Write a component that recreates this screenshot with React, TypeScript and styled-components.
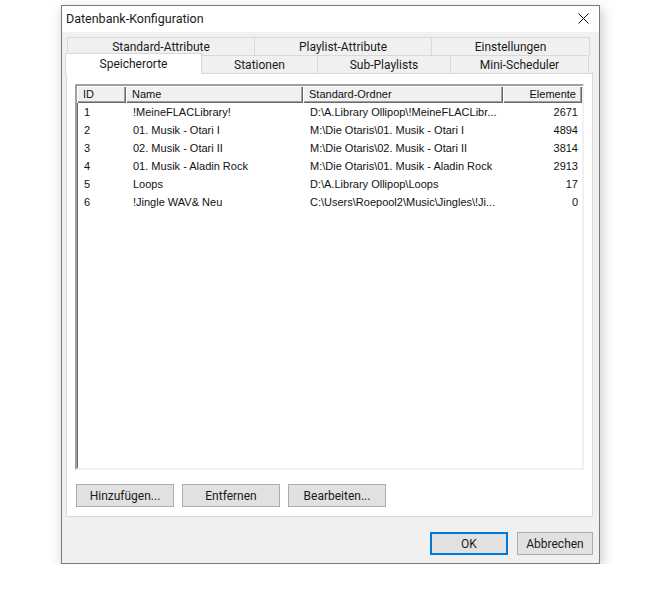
import React from "react";
import styled, { createGlobalStyle } from "styled-components";

const rows = [
  { id: 1, name: "!MeineFLACLibrary!", dir: "D:\\A.Library Ollipop\\!MeineFLACLibr...", count: 2671 },
  { id: 2, name: "01. Musik - Otari I", dir: "M:\\Die Otaris\\01. Musik - Otari I", count: 4894 },
  { id: 3, name: "02. Musik - Otari II", dir: "M:\\Die Otaris\\02. Musik - Otari II", count: 3814 },
  { id: 4, name: "01. Musik - Aladin Rock", dir: "M:\\Die Otaris\\01. Musik - Aladin Rock", count: 2913 },
  { id: 5, name: "Loops", dir: "D:\\A.Library Ollipop\\Loops", count: 17 },
  { id: 6, name: "!Jingle WAV& Neu", dir: "C:\\Users\\Roepool2\\Music\\Jingles\\!Ji...", count: 0 },
];

const backTabs = [
  { label: "Standard-Attribute", w: 188 },
  { label: "Playlist-Attribute", w: 178 },
  { label: "Einstellungen", w: 159 },
];

const frontTabs = [
  { label: "Speicherorte", w: 137, active: true },
  { label: "Stationen", w: 117 },
  { label: "Sub-Playlists", w: 134 },
  { label: "Mini-Scheduler", w: 139 },
];

const App = () => {
  return (
    <Page>
      <GlobalStyle />
      <Window>
        <TitleBar>
          <span>Datenbank-Konfiguration</span>
          <Close>
            <svg width="11" height="11" viewBox="0 0 11 11">
              <path d="M0.5 0.5 L10.5 10.5 M10.5 0.5 L0.5 10.5" stroke="#111" strokeWidth="1" />
            </svg>
          </Close>
        </TitleBar>
        <Client>
          <TabControl>
            <TabRow $offset={1}>
              {backTabs.map((t) => (
                <Tab key={t.label} $w={t.w}>
                  {t.label}
                </Tab>
              ))}
            </TabRow>
            <TabRow $offset={1} $front>
              {frontTabs.map((t) => (
                <Tab key={t.label} $w={t.w} $active={t.active}>
                  {t.label}
                </Tab>
              ))}
            </TabRow>
            <Panel>
              <ListView>
                <HeaderRow>
                  <HeadCell>ID</HeadCell>
                  <HeadCell>Name</HeadCell>
                  <HeadCell>Standard-Ordner</HeadCell>
                  <HeadCell $right>Elemente</HeadCell>
                </HeaderRow>
                {rows.map((r) => (
                  <Row key={r.id}>
                    <Cell>{r.id}</Cell>
                    <Cell>{r.name}</Cell>
                    <Cell>{r.dir}</Cell>
                    <Cell $right>{r.count}</Cell>
                  </Row>
                ))}
              </ListView>
              <ButtonRow>
                <Button $w={98}>Hinzufügen...</Button>
                <Button $w={98}>Entfernen</Button>
                <Button $w={98}>Bearbeiten...</Button>
              </ButtonRow>
            </Panel>
          </TabControl>
          <Footer>
            <Button $w={78} $default>
              OK
            </Button>
            <Button $w={76}>Abbrechen</Button>
          </Footer>
        </Client>
      </Window>
    </Page>
  );
};

export default App;

const GlobalStyle = createGlobalStyle`
  body {
    margin: 0;
    background: #ffffff;
  }
`;

const Page = styled.div`
  padding: 5px 0 0 61px;
  font-family: Roboto, "Noto Sans", sans-serif;
  font-size: 12px;
  color: #1a1a1a;
`;

const Window = styled.div`
  width: 539px;
  height: 559px;
  box-sizing: border-box;
  border: 1px solid #7a7a7a;
  display: flex;
  flex-direction: column;
  box-shadow: 2px 4px 12px rgba(0, 0, 0, 0.22);
`;

const TitleBar = styled.div`
  height: 26px;
  background: #fff;
  display: flex;
  align-items: center;
  justify-content: space-between;
  padding: 0 10px 0 4px;
  span {
    font-size: 12.5px;
    margin-top: -2px;
  }
`;

const Close = styled.div`
  display: flex;
  align-items: center;
  margin-top: -2px;
`;

const Client = styled.div`
  flex: 1;
  background: #f0f0f0;
  padding: 5px 0 0 4px;
  display: flex;
  flex-direction: column;
`;

const TabControl = styled.div`
  width: 527px;
  display: flex;
  flex-direction: column;
`;

const TabRow = styled.div<{ $offset: number; $front?: boolean }>`
  display: flex;
  height: 18px;
  padding-left: ${(p) => p.$offset}px;
  position: relative;
  z-index: ${(p) => (p.$front ? 2 : 1)};
`;

const Tab = styled.div<{ $w: number; $active?: boolean }>`
  width: ${(p) => p.$w}px;
  box-sizing: border-box;
  display: flex;
  align-items: center;
  justify-content: center;
  border: 1px solid #d9d9d9;
  border-bottom: none;
  margin-right: -1px;
  background: ${(p) => (p.$active ? "#fff" : "#f0f0f0")};
  height: ${(p) => (p.$active ? "21px" : "18px")};
  margin-top: ${(p) => (p.$active ? "-2px" : "0")};
  margin-left: ${(p) => (p.$active ? "-2px" : "0")};
  padding-top: 1px;
  padding-bottom: ${(p) => (p.$active ? "2px" : "0")};
  line-height: 1;
`;

const Panel = styled.div`
  height: 444px;
  box-sizing: border-box;
  background: #fff;
  border: 1px solid #d9d9d9;
  padding: 10px 0 0 8px;
  display: flex;
  flex-direction: column;
`;

const ListView = styled.div`
  width: 509px;
  height: 386px;
  box-sizing: border-box;
  border-style: solid;
  border-width: 2px;
  border-color: #a0a0a0 #f0f0f0 #f0f0f0 #a0a0a0;
  box-shadow: inset 1px 1px 0 #696969;
  font-family: "Liberation Sans", Arial, sans-serif;
  font-size: 11px;
  color: #111;
  background: #fff;
`;

const HeaderRow = styled.div`
  display: grid;
  grid-template-columns: 49px 177px 200px 79px;
  height: 17px;
`;

const HeadCell = styled.div<{ $right?: boolean }>`
  background: #f0f0f0;
  box-shadow: inset 1px 1px 0 #fff, inset -1px -1px 0 #696969, inset -2px -2px 0 #a0a0a0;
  display: flex;
  align-items: center;
  justify-content: ${(p) => (p.$right ? "flex-end" : "flex-start")};
  padding: 0 6px;
  line-height: 1;
`;

const Row = styled.div`
  display: grid;
  grid-template-columns: 49px 177px 200px 79px;
  height: 18px;
  align-items: center;
`;

const Cell = styled.div<{ $right?: boolean }>`
  padding: 0 ${(p) => (p.$right ? "4px" : "7px")};
  text-align: ${(p) => (p.$right ? "right" : "left")};
  white-space: nowrap;
  overflow: hidden;
`;

const ButtonRow = styled.div`
  display: flex;
  gap: 8px;
  margin-top: 14px;
  padding-left: 1px;
`;

const Button = styled.div<{ $w: number; $default?: boolean }>`
  width: ${(p) => p.$w}px;
  height: 23px;
  box-sizing: border-box;
  background: #e1e1e1;
  border: 1px solid ${(p) => (p.$default ? "#0078d7" : "#adadad")};
  box-shadow: ${(p) => (p.$default ? "inset 0 0 0 1px #0078d7" : "none")};
  display: flex;
  align-items: center;
  justify-content: center;
  font-size: 12px;
`;

const Footer = styled.div`
  display: flex;
  justify-content: flex-end;
  gap: 9px;
  width: 527px;
  margin-top: 15px;
`;
